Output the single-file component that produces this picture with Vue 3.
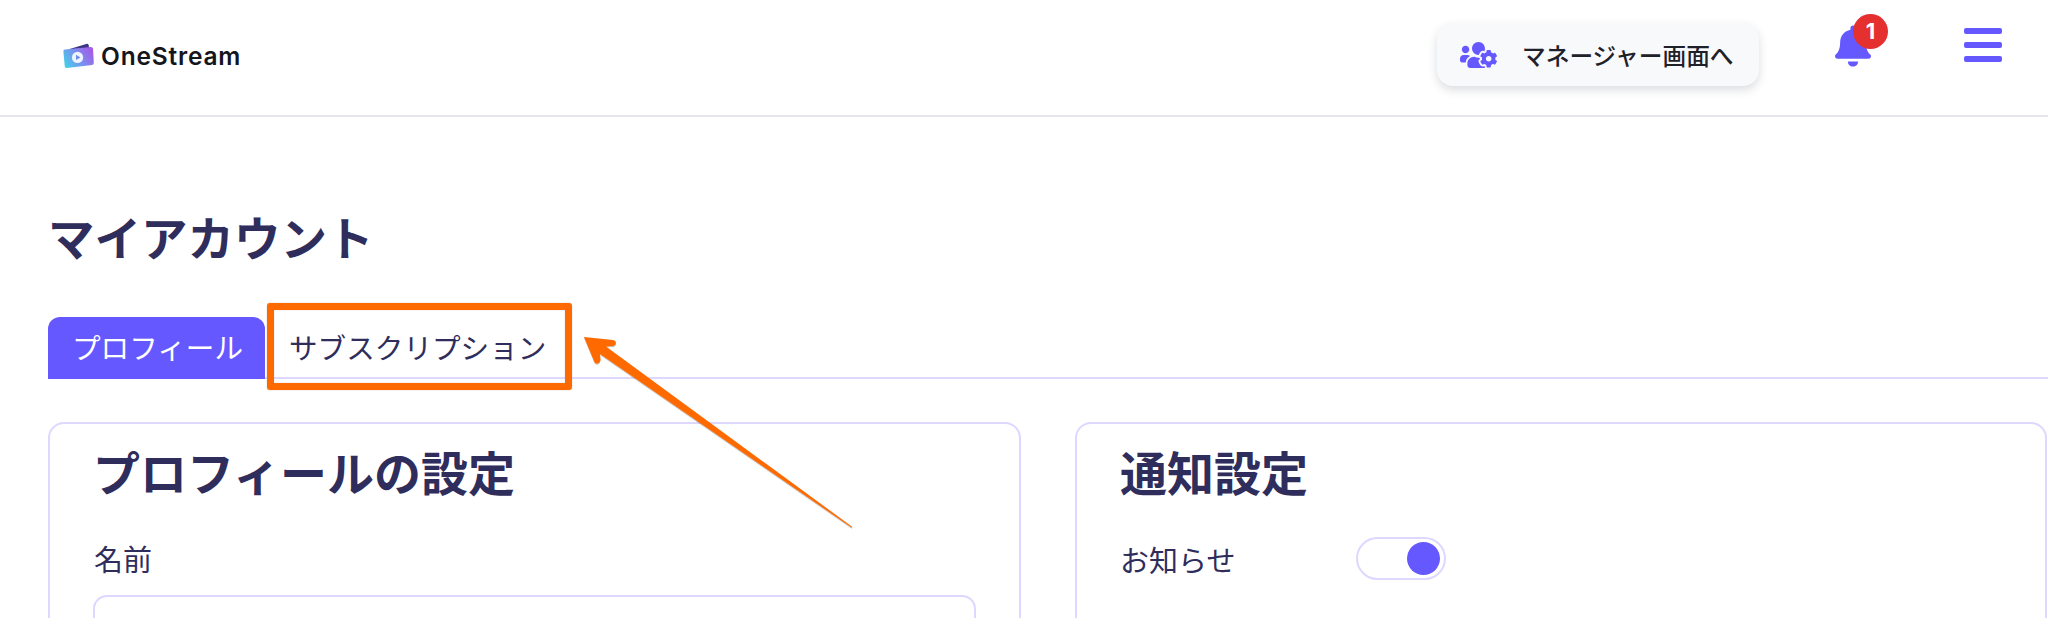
<script setup>
const tabs = [
  { label: 'プロフィール', active: true },
  { label: 'サブスクリプション', active: false },
]
</script>

<template>
  <div class="page">
    <header class="topbar">
      <div class="brand">
        <svg class="brand-icon" viewBox="0 0 32 26" aria-hidden="true">
          <defs>
            <linearGradient id="walletFill" x1="0" y1="0.8" x2="1" y2="0.3">
              <stop offset="0" stop-color="#45d0e8" />
              <stop offset="0.55" stop-color="#7d8bf0" />
              <stop offset="1" stop-color="#a45be6" />
            </linearGradient>
          </defs>
          <path d="M6 6 L24 0.5 Q26 0.2 26.5 2 L27 5 Z" fill="#3a3580" />
          <path d="M2 6.4 L28.6 3.6 Q30.8 3.5 31 5.6 L31.8 20 Q31.9 22 30 22.2 L4 25.4 Q2 25.6 1.8 23.6 L0.4 8.4 Q0.2 6.6 2 6.4 Z" fill="url(#walletFill)" />
          <circle cx="15" cy="14.5" r="5.8" fill="#eef4ff" />
          <path d="M13.4 11.8 L18 14.5 L13.4 17.2 Z" fill="#6f8df0" />
        </svg>
        <span class="brand-name">OneStream</span>
      </div>
      <div class="topbar-right">
        <button class="manager-btn" type="button">
          <svg class="manager-icon" viewBox="0 0 640 512" aria-hidden="true">
            <path fill="currentColor" d="M610.5 341.3c2.6-14.1 2.6-28.5 0-42.6l25.8-14.9c3-1.7 4.3-5.2 3.3-8.5-6.7-21.6-18.2-41.2-33.2-57.4-2.3-2.5-6-3.1-9-1.4l-25.8 14.9c-10.9-9.3-23.4-16.5-36.9-21.3v-29.8c0-3.4-2.4-6.4-5.7-7.1-22.3-5-45-4.8-66.2 0-3.3.7-5.7 3.7-5.7 7.1v29.8c-13.5 4.8-26 12-36.9 21.3l-25.8-14.9c-2.9-1.7-6.7-1.1-9 1.4-15 16.2-26.5 35.8-33.2 57.4-1 3.3.4 6.8 3.3 8.5l25.8 14.9c-2.6 14.1-2.6 28.5 0 42.6l-25.8 14.9c-3 1.7-4.3 5.2-3.3 8.5 6.7 21.6 18.2 41.1 33.2 57.4 2.3 2.5 6 3.1 9 1.4l25.8-14.9c10.9 9.3 23.4 16.5 36.9 21.3v29.8c0 3.4 2.4 6.4 5.7 7.1 22.3 5 45 4.8 66.2 0 3.3-.7 5.7-3.7 5.7-7.1v-29.8c13.5-4.8 26-12 36.9-21.3l25.8 14.9c2.9 1.7 6.7 1.1 9-1.4 15-16.2 26.5-35.8 33.2-57.4 1-3.3-.4-6.8-3.3-8.5l-25.8-14.9zM496 368.5c-26.8 0-48.5-21.8-48.5-48.5s21.8-48.5 48.5-48.5 48.5 21.8 48.5 48.5-21.7 48.5-48.5 48.5zM96 224c35.3 0 64-28.7 64-64s-28.7-64-64-64-64 28.7-64 64 28.7 64 64 64zm224 32c1.9 0 3.7-.5 5.6-.6 8.3-21.7 20.5-42.1 36.3-59.2 7.4-8 17.9-12.6 28.9-12.6 6.9 0 13.7 1.8 19.6 5.3l7.9 4.6c.8-.5 1.6-.9 2.4-1.4 7-14.6 11.2-30.8 11.2-48 0-61.9-50.1-112-112-112S208 82.1 208 144c0 61.9 50.1 112 112 112zm105.2 194.5c-2.3-1.2-4.6-2.6-6.8-3.9-8.2 4.8-15.3 9.8-27.5 9.8-10.9 0-21.4-4.6-28.9-12.6-18.3-19.8-32.3-43.9-40.2-69.6-10.7-34.5 24.9-49.7 25.8-50.3-.1-2.6-.1-5.2 0-7.8l-7.9-4.6c-3.8-2.2-7-5-9.8-8.1-3.3.2-6.5.6-9.8.6-24.6 0-47.6-6-68.5-16h-8.3C179.6 288 128 339.6 128 403.2V432c0 26.5 21.5 48 48 48h255.4c-3.7-6-6.2-12.8-6.2-20.3v-9.2zM173.1 274.6C161.5 263.1 145.6 256 128 256H64c-35.3 0-64 28.7-64 64v32c0 17.7 14.3 32 32 32h65.9c6.3-47.4 34.9-87.3 75.2-109.4z" />
          </svg>
          <span>マネージャー画面へ</span>
        </button>
        <div class="bell">
          <svg class="bell-icon" viewBox="0 0 448 512" aria-hidden="true">
            <path fill="currentColor" d="M224 512c35.32 0 63.97-28.65 63.97-64H160.03c0 35.35 28.65 64 63.97 64zm215.39-149.71c-19.32-20.76-55.47-51.99-55.47-154.29 0-77.7-54.48-139.9-127.94-155.16V32c0-17.67-14.32-32-31.98-32s-31.98 14.33-31.98 32v20.84C118.56 68.1 64.08 130.3 64.08 208c0 102.3-36.15 133.53-55.47 154.29-6 6.45-8.66 14.16-8.61 21.71.11 16.4 12.98 32 32.1 32h383.8c19.12 0 32-15.6 32.1-32 .05-7.55-2.61-15.27-8.61-21.71z" />
          </svg>
          <span class="bell-badge">1</span>
        </div>
        <div class="menu-icon">
          <span></span>
          <span></span>
          <span></span>
        </div>
      </div>
    </header>

    <main class="content">
      <h1 class="page-title">マイアカウント</h1>

      <nav class="tabs">
        <a v-for="tab in tabs" :key="tab.label" class="tab" :class="{ active: tab.active }">{{ tab.label }}</a>
      </nav>

      <div class="cards">
        <section class="card">
          <h2 class="card-title">プロフィールの設定</h2>
          <label class="field-label">名前</label>
          <div class="input"></div>
        </section>
        <section class="card">
          <h2 class="card-title">通知設定</h2>
          <div class="toggle-row">
            <span class="toggle-label">お知らせ</span>
            <span class="toggle"><span class="toggle-knob"></span></span>
          </div>
        </section>
      </div>
    </main>

    <!-- callout drawn over the screenshot -->
    <div class="callout-box"></div>
    <svg class="callout-arrow" viewBox="0 0 2048 618" aria-hidden="true">
      <defs>
        <filter id="arrowShadow" x="-5%" y="-5%" width="110%" height="110%">
          <feDropShadow dx="0" dy="1" stdDeviation="0.6" flood-color="#000" flood-opacity="0.3" />
        </filter>
      </defs>
      <path d="M584 337 L613 340 Q617 341 615.5 344.5 Q614.5 346 612 346 L606 346.5 L852.5 527 L851.5 527.5 L600 354 L600.5 360 Q599.5 364 596.5 363.5 Q594.5 363 594 361 Z" fill="#ff6a00" filter="url(#arrowShadow)" />
    </svg>
  </div>
</template>

<style scoped>
.page {
  position: relative;
  width: 2048px;
  height: 618px;
  overflow: hidden;
  background: #fff;
  color: #2f2d5b;
  font-family: "Noto Sans CJK JP", "Noto Sans", sans-serif;
}

.topbar {
  display: flex;
  align-items: flex-start;
  justify-content: space-between;
  height: 117px;
  box-sizing: border-box;
  border-bottom: 2px solid #e5e7eb;
  padding: 0 46px 0 63px;
}
.brand { display: flex; align-items: center; gap: 7px; margin-top: 42px; }
.brand-icon { width: 31px; height: 26px; }
.brand-name {
  font-family: Inter, "Noto Sans", sans-serif;
  font-size: 24.5px;
  font-weight: 600;
  letter-spacing: 0.8px;
  line-height: 28px;
  color: #15151c;
}
.topbar-right { display: flex; align-items: flex-start; }
.manager-btn {
  display: flex;
  align-items: center;
  gap: 25px;
  width: 322px;
  height: 63px;
  margin-top: 23px;
  padding: 0 0 0 23px;
  box-sizing: border-box;
  border: none;
  border-radius: 16px;
  background: #f8f9fb;
  box-shadow: 0 4px 10px rgba(40, 44, 70, 0.16);
  font-family: inherit;
  font-size: 23.7px;
  font-weight: 500;
  color: #1f2129;
}
.manager-icon { width: 37px; height: 30px; color: #6658ff; }
.bell { position: relative; margin: 25px 0 0 76px; width: 36px; height: 42px; }
.bell-icon { display: block; width: 36px; height: 42px; color: #6658ff; }
.bell-badge {
  position: absolute;
  top: -11px;
  left: 18px;
  width: 35px;
  height: 35px;
  border-radius: 50%;
  background: #e53030;
  color: #fff;
  font-family: Inter, sans-serif;
  font-size: 22px;
  font-weight: 700;
  line-height: 35px;
  text-align: center;
}
.menu-icon {
  display: flex;
  flex-direction: column;
  gap: 8px;
  width: 38px;
  margin: 28px 0 0 93px;
}
.menu-icon span { display: block; height: 6px; border-radius: 2px; background: #6658ff; }

.content { padding: 0 1px 0 48px; }
.page-title {
  margin: 0;
  padding-top: 86px;
  font-size: 46.5px;
  font-weight: 700;
  line-height: 66px;
}
.tabs {
  display: flex;
  height: 62px;
  margin-top: 48px;
  margin-right: -1px;
  box-sizing: border-box;
  border-bottom: 2px solid #dcd8ff;
}
.tab {
  width: 217px;
  height: 62px;
  box-sizing: border-box;
  padding: 0 24px;
  border-radius: 12px 12px 0 0;
  font-size: 28.6px;
  line-height: 60px;
  white-space: nowrap;
}
.tab.active { background: #6658ff; color: #fff; }
.tab:not(.active) { width: 304px; }

.cards {
  display: grid;
  grid-template-columns: 973px 1fr;
  gap: 54px;
  margin-top: 43px;
}
.card {
  height: 300px;
  box-sizing: border-box;
  padding: 14px 44px 0;
  border: 2px solid #dcd8ff;
  border-radius: 16px;
}
.card-title {
  margin: 0 0 0 -1px;
  font-size: 47px;
  font-weight: 700;
  line-height: 66px;
}
.field-label {
  display: block;
  margin-top: 34px;
  font-size: 29px;
  line-height: 40px;
}
.input {
  height: 80px;
  margin: 17px -1px 0 -1px;
  border: 2px solid #dcd8ff;
  border-radius: 14px;
}
.toggle-row { display: flex; align-items: center; margin-top: 33px; }
.toggle-label { width: 236px; margin-left: -1px; font-size: 29px; line-height: 40px; }
.toggle {
  display: flex;
  justify-content: flex-end;
  align-items: center;
  width: 90px;
  height: 43px;
  box-sizing: border-box;
  padding-right: 4px;
  border: 2px solid #dcd8ff;
  border-radius: 22px;
}
.toggle-knob { width: 33px; height: 33px; border-radius: 50%; background: #6658ff; }

.callout-box {
  position: absolute;
  left: 267px;
  top: 303px;
  width: 305px;
  height: 87px;
  box-sizing: border-box;
  border: 7px solid #ff6a00;
  border-radius: 3px;
  box-shadow: 0 0 1px rgba(0, 0, 0, 0.5), inset 0 0 1px rgba(0, 0, 0, 0.4);
}
.callout-arrow {
  position: absolute;
  left: 0;
  top: 0;
  width: 2048px;
  height: 618px;
  pointer-events: none;
}
</style>
